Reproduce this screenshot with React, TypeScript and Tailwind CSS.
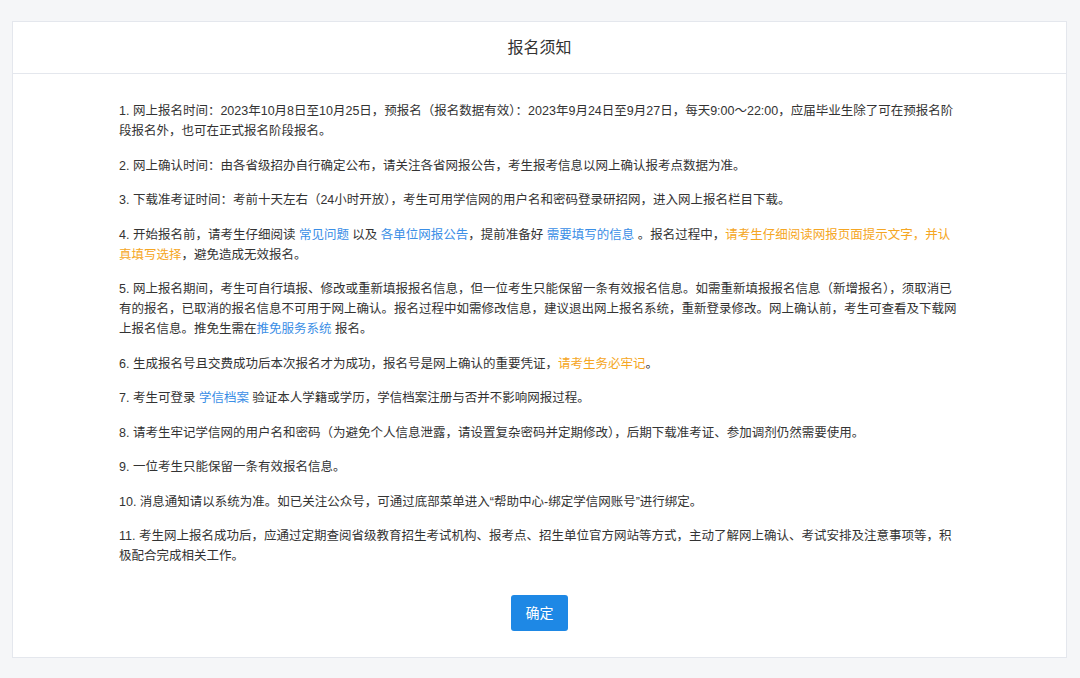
import React from "react";

const Blue = ({ children }: { children: React.ReactNode }) => (
  <span className="text-[#3a8ee6]">{children}</span>
);

const Orange = ({ children }: { children: React.ReactNode }) => (
  <span className="text-[#f5a623]">{children}</span>
);

const items: React.ReactNode[] = [
  <>1. 网上报名时间：2023年10月8日至10月25日，预报名（报名数据有效）：2023年9月24日至9月27日，每天9:00～22:00，应届毕业生除了可在预报名阶段报名外，也可在正式报名阶段报名。</>,
  <>2. 网上确认时间：由各省级招办自行确定公布，请关注各省网报公告，考生报考信息以网上确认报考点数据为准。</>,
  <>3. 下载准考证时间：考前十天左右（24小时开放），考生可用学信网的用户名和密码登录研招网，进入网上报名栏目下载。</>,
  <>
    4. 开始报名前，请考生仔细阅读 <Blue>常见问题</Blue> 以及 <Blue>各单位网报公告</Blue>，提前准备好 <Blue>需要填写的信息</Blue> 。报名过程中，<Orange>请考生仔细阅读网报页面提示文字，并认真填写选择</Orange>，避免造成无效报名。
  </>,
  <>
    5. 网上报名期间，考生可自行填报、修改或重新填报报名信息，但一位考生只能保留一条有效报名信息。如需重新填报报名信息（新增报名），须取消已有的报名，已取消的报名信息不可用于网上确认。报名过程中如需修改信息，建议退出网上报名系统，重新登录修改。网上确认前，考生可查看及下载网上报名信息。推免生需在<Blue>推免服务系统</Blue> 报名。
  </>,
  <>
    6. 生成报名号且交费成功后本次报名才为成功，报名号是网上确认的重要凭证，<Orange>请考生务必牢记</Orange>。
  </>,
  <>
    7. 考生可登录 <Blue>学信档案</Blue> 验证本人学籍或学历，学信档案注册与否并不影响网报过程。
  </>,
  <>8. 请考生牢记学信网的用户名和密码（为避免个人信息泄露，请设置复杂密码并定期修改），后期下载准考证、参加调剂仍然需要使用。</>,
  <>9. 一位考生只能保留一条有效报名信息。</>,
  <>10. 消息通知请以系统为准。如已关注公众号，可通过底部菜单进入“帮助中心-绑定学信网账号”进行绑定。</>,
  <>11. 考生网上报名成功后，应通过定期查阅省级教育招生考试机构、报考点、招生单位官方网站等方式，主动了解网上确认、考试安排及注意事项等，积极配合完成相关工作。</>,
];

export default function App() {
  return (
    <div className="min-h-screen bg-[#f5f6f8] pl-[12px] pr-[13px] pt-[21px] pb-[19px] font-['Liberation_Sans','Noto_Sans_CJK_SC',sans-serif]">
      <div className="border border-[#e4e7ed] bg-white">
        <div className="flex h-[52px] items-center justify-center border-b border-[#e4e7ed] text-[16px] text-[#333]">
          报名须知
        </div>
        <div className="px-[106px] pt-[27px] pb-[26px]">
          <div className="flex flex-col gap-[14.5px] text-[12.5px] leading-[20px] text-[#333]">
            {items.map((item, i) => (
              <p key={i}>{item}</p>
            ))}
          </div>
          <div className="mt-[29px] flex justify-center">
            <button className="h-[36px] w-[57px] rounded-[3px] bg-[#1e88e5] text-[14px] text-white">
              确定
            </button>
          </div>
        </div>
      </div>
    </div>
  );
}
